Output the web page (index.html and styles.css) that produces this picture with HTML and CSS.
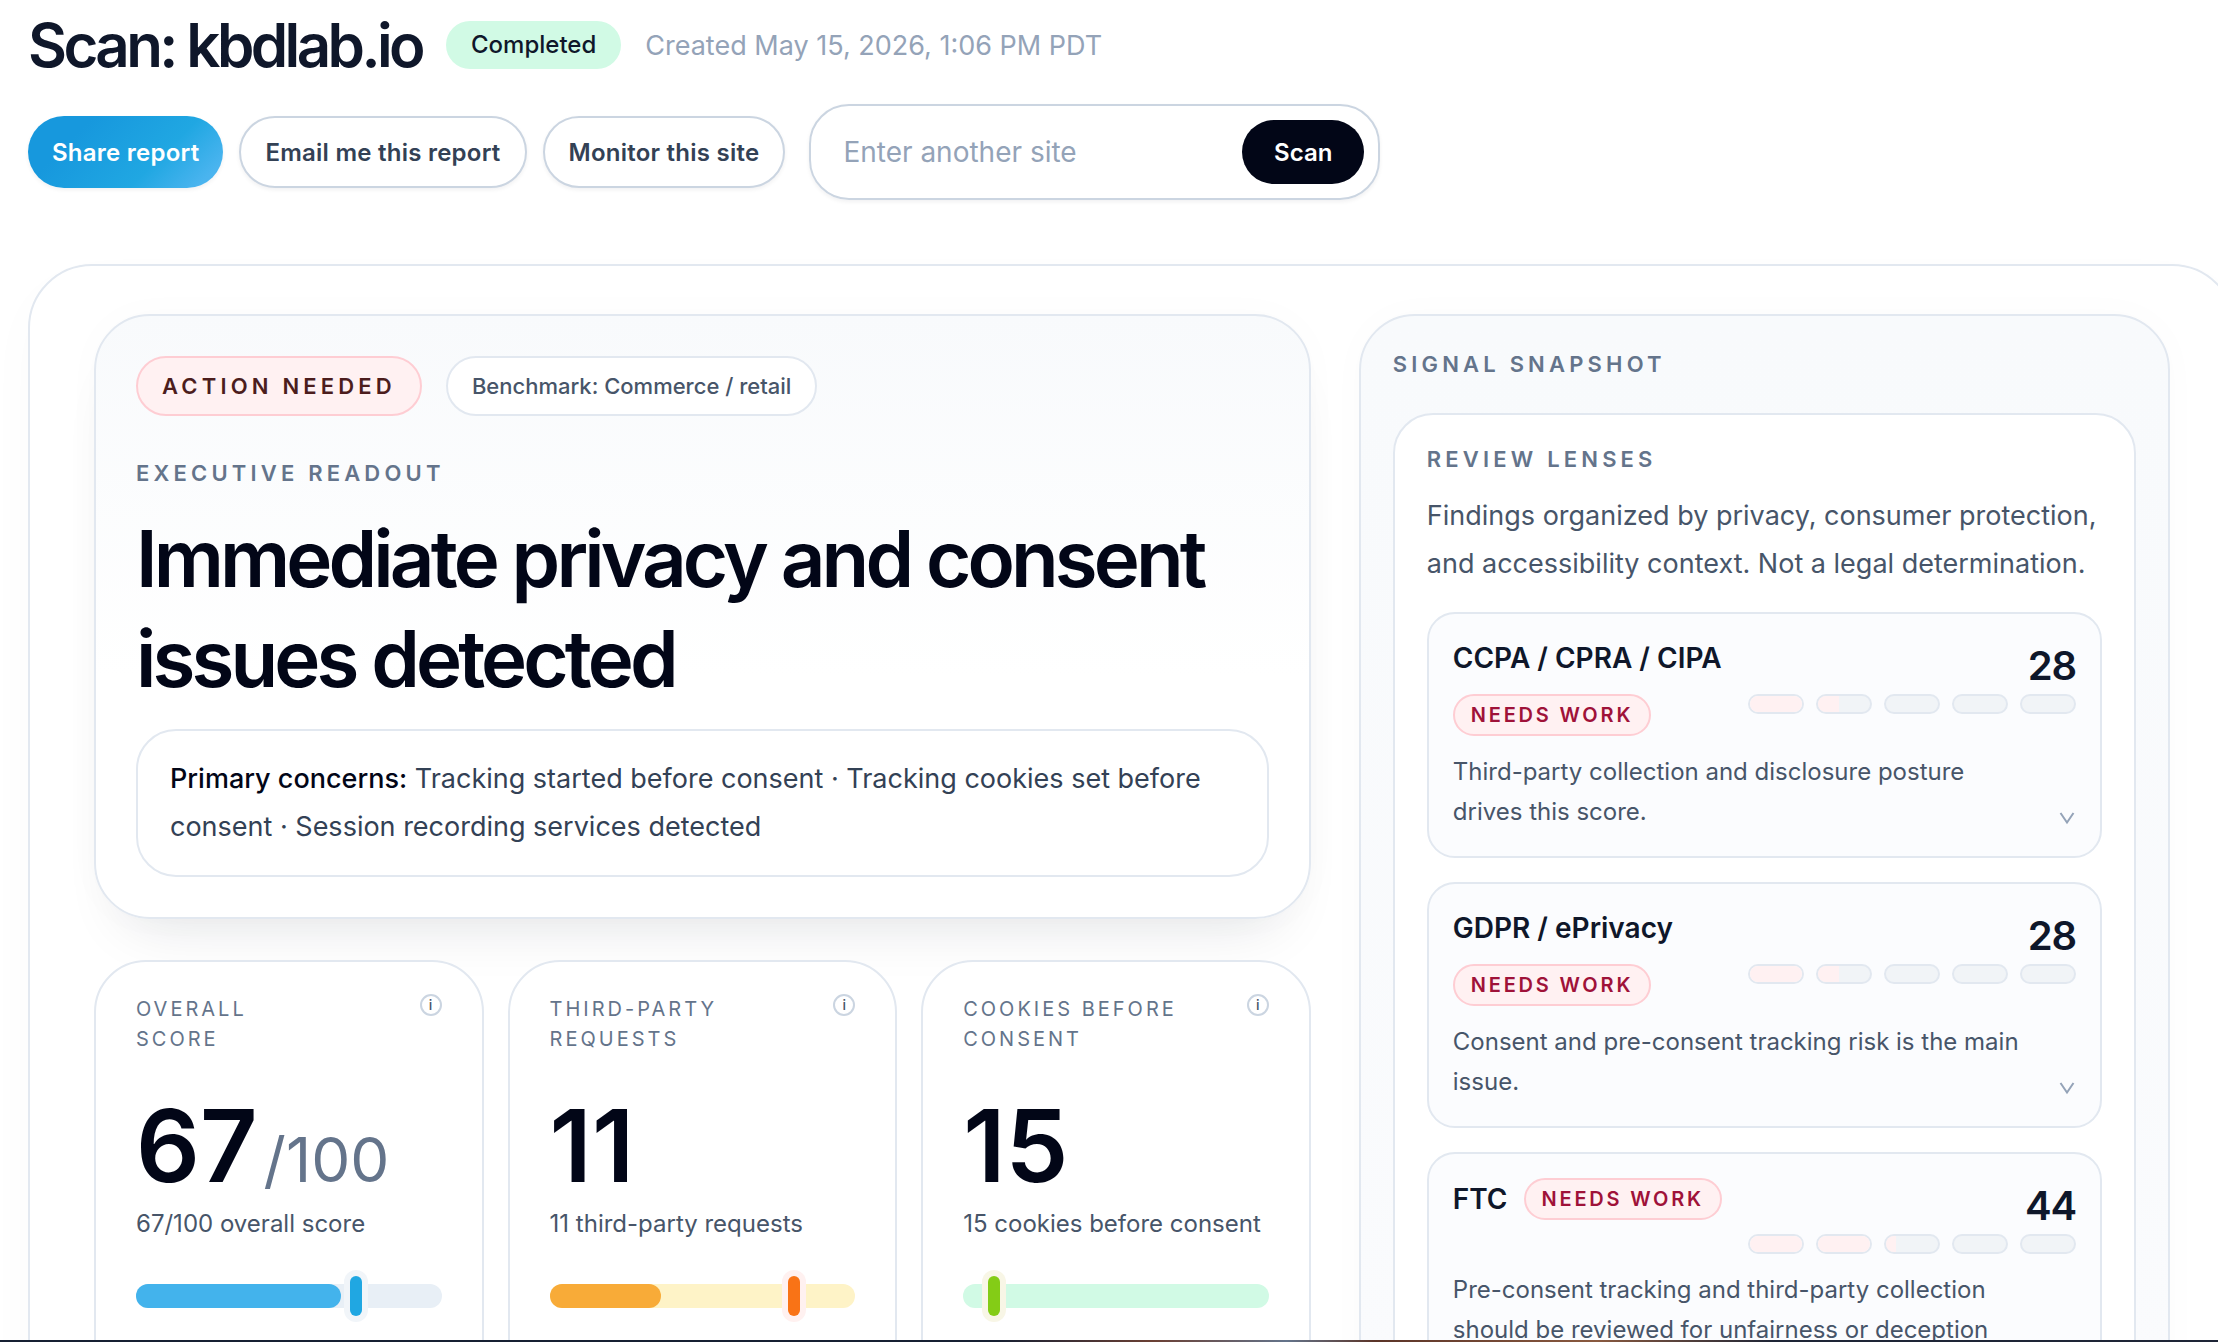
FILE: index.html
```html
<!DOCTYPE html>
<html lang="en">
<head>
<meta charset="utf-8">
<meta name="viewport" content="width=device-width, initial-scale=1">
<title>Scan: kbdlab.io</title>
<link rel="stylesheet" href="styles.css">
</head>
<body>
<div class="page">
  <header class="page-head">
    <div class="title-row">
      <h1 class="title">Scan: kbdlab.io</h1>
      <span class="status">Completed</span>
      <span class="created">Created May 15, 2026, 1:06 PM PDT</span>
    </div>
    <div class="actions">
      <button class="btn btn-primary" type="button">Share report</button>
      <button class="btn" type="button">Email me this report</button>
      <button class="btn" type="button">Monitor this site</button>
      <form class="scan-form">
        <input class="scan-input" type="text" placeholder="Enter another site" aria-label="Enter another site">
        <button class="scan-btn" type="submit">Scan</button>
      </form>
    </div>
  </header>

  <main class="report">
    <div class="primary">
      <section class="hero">
        <div class="badges">
          <span class="badge badge-alert">ACTION NEEDED</span>
          <span class="badge">Benchmark: Commerce / retail</span>
        </div>
        <p class="eyebrow hero-eyebrow">EXECUTIVE READOUT</p>
        <h2 class="headline">Immediate privacy and consent issues detected</h2>
        <p class="concerns"><strong>Primary concerns:</strong> Tracking started before consent · Tracking cookies set before consent · Session recording services detected</p>
      </section>

      <div class="stats">
        <section class="stat stat-blue">
          <div class="stat-head">
            <h3 class="stat-label">OVERALL<br>SCORE</h3>
            <button class="info" type="button" aria-label="About overall score">i</button>
          </div>
          <p class="stat-value">67<span class="stat-max">/100</span></p>
          <p class="stat-note">67/100 overall score</p>
          <div class="track"><div class="fill" style="width:67%"></div><div class="marker" style="left:72%"></div></div>
        </section>
        <section class="stat stat-orange">
          <div class="stat-head">
            <h3 class="stat-label">THIRD-PARTY REQUESTS</h3>
            <button class="info" type="button" aria-label="About third-party requests">i</button>
          </div>
          <p class="stat-value">11</p>
          <p class="stat-note">11 third-party requests</p>
          <div class="track"><div class="fill" style="width:36.6%"></div><div class="marker" style="left:80%"></div></div>
        </section>
        <section class="stat stat-green">
          <div class="stat-head">
            <h3 class="stat-label">COOKIES BEFORE CONSENT</h3>
            <button class="info" type="button" aria-label="About cookies before consent">i</button>
          </div>
          <p class="stat-value">15</p>
          <p class="stat-note">15 cookies before consent</p>
          <div class="track"><div class="marker" style="left:10%"></div></div>
        </section>
      </div>
    </div>

    <aside class="snapshot">
      <h2 class="eyebrow">SIGNAL SNAPSHOT</h2>
      <section class="lenses">
        <h3 class="eyebrow">REVIEW LENSES</h3>
        <p class="lenses-intro">Findings organized by privacy, consumer protection, and accessibility context. Not a legal determination.</p>

        <details class="lens">
          <summary class="lens-body">
            <span class="lens-top">
              <span class="lens-name"><span class="lens-title">CCPA / CPRA / CIPA</span><span class="tag">NEEDS WORK</span></span>
              <span class="lens-score">
                <span class="score">28</span>
                <span class="segments">
                  <span class="seg"><span class="seg-fill" style="width:100%"></span></span>
                  <span class="seg"><span class="seg-fill" style="width:40%"></span></span>
                  <span class="seg"></span><span class="seg"></span><span class="seg"></span>
                </span>
              </span>
            </span>
            <span class="lens-bottom">
              <span class="lens-desc">Third-party collection and disclosure posture drives this score.</span>
              <svg class="chevron" viewBox="0 0 24 24" aria-hidden="true"><path d="M8.5 5 15 14.500 21.500 5"/></svg>
            </span>
          </summary>
        </details>

        <details class="lens">
          <summary class="lens-body">
            <span class="lens-top">
              <span class="lens-name"><span class="lens-title">GDPR / ePrivacy</span><span class="tag">NEEDS WORK</span></span>
              <span class="lens-score">
                <span class="score">28</span>
                <span class="segments">
                  <span class="seg"><span class="seg-fill" style="width:100%"></span></span>
                  <span class="seg"><span class="seg-fill" style="width:40%"></span></span>
                  <span class="seg"></span><span class="seg"></span><span class="seg"></span>
                </span>
              </span>
            </span>
            <span class="lens-bottom">
              <span class="lens-desc">Consent and pre-consent tracking risk is the main issue.</span>
              <svg class="chevron" viewBox="0 0 24 24" aria-hidden="true"><path d="M8.5 5 15 14.500 21.500 5"/></svg>
            </span>
          </summary>
        </details>

        <details class="lens">
          <summary class="lens-body">
            <span class="lens-top">
              <span class="lens-name"><span class="lens-title">FTC</span><span class="tag">NEEDS WORK</span></span>
              <span class="lens-score">
                <span class="score">44</span>
                <span class="segments">
                  <span class="seg"><span class="seg-fill" style="width:100%"></span></span>
                  <span class="seg"><span class="seg-fill" style="width:100%"></span></span>
                  <span class="seg"><span class="seg-fill" style="width:20%"></span></span>
                  <span class="seg"></span><span class="seg"></span>
                </span>
              </span>
            </span>
            <span class="lens-bottom">
              <span class="lens-desc">Pre-consent tracking and third-party collection should be reviewed for unfairness or deception</span>
            </span>
          </summary>
        </details>
      </section>
    </aside>
  </main>
</div>
<div class="bottom-edge"></div>
</body>
</html>
```
FILE: styles.css
```css
* { box-sizing: border-box; }

html { overflow: hidden; }

body {
  margin: 0;
  background: #fff;
  color: #0f172a;
  font-family: Inter, "Liberation Sans", sans-serif;
  -webkit-font-smoothing: antialiased;
}

h1, h2, h3, p { margin: 0; }
button, input { font: inherit; }

.page { padding: 8px 0 0 28px; }

/* Header */
.title-row { display: flex; align-items: center; gap: 24px; height: 74px; }
.title { font-size: 60px; line-height: 72px; font-weight: 600; letter-spacing: -0.06em; }
.status {
  padding: 8px 25px;
  border-radius: 24px;
  background: #d1fae5;
  font-size: 24px;
  line-height: 32px;
  font-weight: 500;
}
.created { font-size: 27px; color: #94a3b8; }

.actions { display: flex; align-items: center; gap: 16px; margin-top: 22px; }
.btn {
  height: 72px;
  padding: 0 24px;
  border: 2px solid #cbd5e1;
  border-radius: 36px;
  background: #fff;
  color: #334155;
  font-size: 24px;
  font-weight: 600;
  letter-spacing: 0.01em;
  box-shadow: 0 2px 4px rgba(15, 23, 42, 0.06);
}
.btn-primary {
  border: 0;
  background: linear-gradient(135deg, #1798dd 25%, #20a7e2 65%, #4ab4ef 90%);
  color: #fff;
}
.scan-form {
  display: flex;
  align-items: center;
  width: 571px;
  height: 96px;
  margin-left: 8px;
  padding: 0 14px 0 32px;
  border: 2px solid #cbd5e1;
  border-radius: 40px;
  box-shadow: 0 2px 4px rgba(15, 23, 42, 0.06);
}
.scan-input {
  flex: 1;
  min-width: 0;
  padding: 0;
  border: 0;
  outline: 0;
  background: none;
  font-size: 28px;
}
.scan-input::placeholder { color: #94a3b8; opacity: 1; }
.scan-btn {
  height: 64px;
  padding: 0 32px;
  border: 0;
  border-radius: 32px;
  background: #020617;
  color: #fff;
  font-size: 24px;
  font-weight: 600;
}

/* Report shell, running past the right edge of the window */
.report {
  display: grid;
  grid-template-columns: minmax(0, 3fr) minmax(0, 2fr);
  align-items: start;
  gap: 48px;
  margin: 64px -18px 0 0;
  padding: 48px 64px;
  border: 2px solid #e2e8f0;
  border-radius: 64px;
  box-shadow: 0 20px 60px rgba(15, 23, 42, 0.02);
}

.eyebrow { font-size: 22px; line-height: 32px; font-weight: 600; letter-spacing: 0.19em; color: #64748b; }

/* Hero */
.hero {
  padding: 40px;
  border: 2px solid #e2e8f0;
  border-radius: 56px;
  background: linear-gradient(#f8fafc, #fff 60%);
  box-shadow: 0 36px 60px -32px rgba(15, 23, 42, 0.12), 0 0 40px rgba(15, 23, 42, 0.02);
}
.badges { display: flex; gap: 24px; }
.badge {
  padding: 12px 24px;
  border: 2px solid #e2e8f0;
  border-radius: 30px;
  background: #fff;
  font-size: 22px;
  line-height: 32px;
  font-weight: 500;
  color: #475569;
}
.badge-alert {
  border-color: #fecdd3;
  background: #fff1f2;
  color: #4c1d1d;
  font-weight: 600;
  letter-spacing: 0.19em;
}
.hero-eyebrow { margin-top: 41px; }
.headline {
  margin: 20px 0;
  font-size: 78px;
  line-height: 100px;
  font-weight: 600;
  letter-spacing: -0.05em;
  color: #020617;
}
.concerns {
  padding: 24px 32px;
  border: 2px solid #e2e8f0;
  border-radius: 40px;
  background: #fff;
  font-size: 27px;
  line-height: 48px;
  color: #334155;
}
.concerns strong { font-weight: 500; color: #020617; }

/* Stats */
.stats { display: grid; grid-template-columns: repeat(3, minmax(0, 1fr)); gap: 24px; margin-top: 41px; }
.stat {
  padding: 32px 40px 128px;
  border: 2px solid #e2e8f0;
  border-radius: 52px;
  background: #fff;
}
.stat-head { display: flex; justify-content: space-between; gap: 24px; min-height: 60px; }
.stat-label {
  max-width: 220px;
  font-size: 20px;
  line-height: 30px;
  font-weight: 400;
  letter-spacing: 0.15em;
  color: #64748b;
}
.info {
  flex: none;
  width: 22px;
  height: 22px;
  padding: 0;
  border: 2px solid #cbd5e1;
  border-radius: 50%;
  background: #fff;
  color: #475569;
  font-size: 14px;
  line-height: 18px;
  font-weight: 500;
}
.stat-value {
  display: flex;
  align-items: baseline;
  gap: 6px;
  margin-top: 44px;
  font-size: 100px;
  line-height: 96px;
  font-weight: 600;
  color: #020617;
}
.stat-max { font-size: 62px; line-height: 62px; font-weight: 400; color: #64748b; }
.stat-note { margin: 10px 0 40px; font-size: 24px; line-height: 40px; color: #475569; white-space: nowrap; }
.track { position: relative; height: 24px; border-radius: 12px; }
.fill { height: 100%; border-radius: 12px; }
.marker {
  position: absolute;
  top: -8px;
  width: 12px;
  height: 40px;
  margin-left: -6px;
  border-radius: 6px;
}
.stat-blue .track { background: #e8eff6; }
.stat-blue .fill { background: #43b3ec; }
.stat-blue .marker { background: #20a7e2; box-shadow: 0 0 0 6px #f1f5f9; }
.stat-orange .track { background: #fef3c7; }
.stat-orange .fill { background: #f8ab38; }
.stat-orange .marker { background: #f97316; box-shadow: 0 0 0 6px #fff1f0; }
.stat-green .track { background: #d1fae5; }
.stat-green .marker { background: #84cc16; box-shadow: 0 0 0 6px #f8f6e6; }

/* Signal snapshot */
.snapshot {
  padding: 32px;
  border: 2px solid #e2e8f0;
  border-radius: 56px;
  background: linear-gradient(#f8fafc, #fafbfd);
  box-shadow: 0 0 40px rgba(15, 23, 42, 0.02);
}
.lenses {
  display: flex;
  flex-direction: column;
  gap: 24px;
  margin-top: 33px;
  padding: 28px 32px 32px;
  border: 2px solid #e2e8f0;
  border-radius: 40px;
  background: #fff;
}
.lenses-intro { margin-top: -7px; font-size: 27px; line-height: 48px; color: #475569; }
.lens { border: 2px solid #e2e8f0; border-radius: 28px; background: #fbfcfe; }
.lens-body { display: flex; flex-direction: column; gap: 16px; padding: 24px; list-style: none; cursor: pointer; }
.lens-top { display: flex; justify-content: space-between; gap: 24px; }
.lens-name { display: flex; flex: 1; flex-wrap: wrap; align-items: center; align-content: flex-start; gap: 16px; }
.lens-title { font-size: 28px; line-height: 40px; font-weight: 600; white-space: nowrap; }
.tag {
  padding: 4px 16px;
  border: 2px solid #fecdd3;
  border-radius: 21px;
  background: #fff1f2;
  color: #9f1239;
  font-size: 20px;
  line-height: 30px;
  font-weight: 600;
  letter-spacing: 0.14em;
  white-space: nowrap;
}
.lens-score { display: flex; flex-direction: column; align-items: flex-end; }
.score { font-size: 40px; line-height: 56px; font-weight: 600; letter-spacing: -0.03em; }
.segments { display: flex; gap: 12px; }
.seg {
  width: 56px;
  height: 20px;
  overflow: hidden;
  border: 2px solid #e2e8f0;
  border-radius: 10px;
  background: #f1f4f7;
}
.seg-fill { display: block; height: 100%; background: #fff1f2; }
.lens-bottom { display: flex; justify-content: space-between; align-items: flex-end; gap: 24px; }
.lens-desc { flex: 1; max-width: 576px; font-size: 24px; line-height: 40px; color: #475569; }
.chevron { width: 24px; height: 24px; fill: none; stroke: #94a3b8; stroke-width: 2; }

/* Dark strip along the window's bottom edge */
.bottom-edge {
  position: fixed;
  inset: auto 0 0;
  height: 2px;
  background: linear-gradient(90deg, #172033 45%, #6b4034 52%, #64748b 58%, #5b3428 62%, #8a5a40 72%, #1e2536 80%, #1e2536);
}
```
